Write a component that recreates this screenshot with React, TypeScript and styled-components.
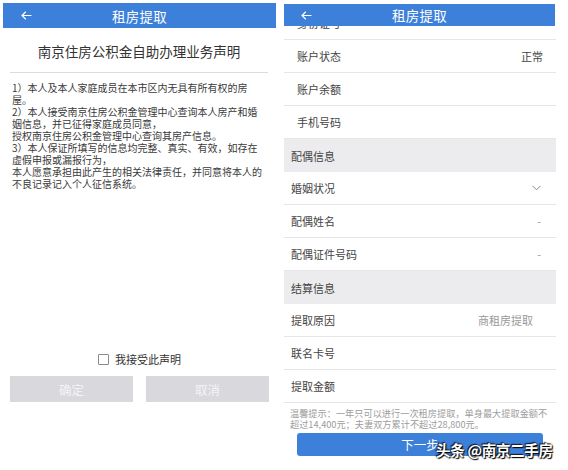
import React from 'react'
import styled, { createGlobalStyle } from 'styled-components'

const GlobalStyle = createGlobalStyle`
    html, body {
        margin: 0;
        padding: 0;
        background: #fff;
    }
    body {
        font-family: "Noto Sans CJK SC", "Noto Sans", sans-serif;
        color: #333;
    }
`

const BLUE = '#3d80da'

const Page = styled.div`
    display: flex;
    width: 568px;
    height: 470px;
    overflow: hidden;
    background: #fff;
`

const Header = styled.div`
    display: grid;
    grid-template-columns: 40px 1fr 40px;
    align-items: center;
    background: ${BLUE};
    color: #fff;
    height: ${p => p.$height}px;
`

const Back = styled.div`
    display: flex;
    align-items: center;
    padding-left: ${p => p.$offset}px;
`

const HeaderTitle = styled.div`
    text-align: center;
    font-size: 13.5px;
    letter-spacing: 0.3px;
`

// left screen
const LeftPanel = styled.div`
    box-sizing: border-box;
    width: 273px;
    height: 470px;
    margin-left: 3px;
    padding: 3px 0 68px;
    display: flex;
    flex-direction: column;
    background: #fff;
`

const DocTitle = styled.div`
    height: 42px;
    margin: 0 8px 0 7px;
    display: flex;
    align-items: center;
    justify-content: center;
    padding-top: 2px;
    font-size: 13.5px;
    color: #333;
    border-bottom: 1px solid #dcdcdc;
`

const DocBody = styled.div`
    flex: 1;
    padding: 9px 0 0 9px;
    font-size: 10px;
    line-height: 12px;
    color: #3a3a3a;
`

const DocLine = styled.div`
    white-space: nowrap;
`

const AgreeRow = styled.label`
    display: flex;
    align-items: center;
    justify-content: center;
    gap: 6px;
    font-size: 11px;
    color: #333;
    height: 12px;
`

const CheckBox = styled.span`
    box-sizing: border-box;
    width: 11px;
    height: 11px;
    border: 1px solid #8a8a8a;
    border-radius: 1px;
    background: #fff;
`

const ButtonRow = styled.div`
    display: grid;
    grid-template-columns: 1fr 1fr;
    gap: 13px;
    padding: 0 7px;
    margin-top: 11px;
`

const GreyButton = styled.div`
    height: 26px;
    display: flex;
    align-items: center;
    justify-content: center;
    background: #d9d8dc;
    color: #f4f4f6;
    font-size: 12.5px;
`

// right screen
const RightPanel = styled.div`
    position: relative;
    box-sizing: border-box;
    width: 272px;
    height: 470px;
    margin-left: 8px;
    padding-top: 7px;
    overflow: hidden;
    background: #fff;
`

const Overlay = styled.div`
    position: absolute;
    top: 4px;
    left: 0;
    right: 1px;
    z-index: 2;
`

const Row = styled.div`
    box-sizing: border-box;
    height: 33px;
    display: flex;
    align-items: center;
    justify-content: space-between;
    padding: 0 ${p => p.$right}px 0 ${p => p.$indent}px;
    font-size: 11px;
    color: #444;
    border-bottom: 1px solid #e6e6e8;
`

const Section = styled.div`
    box-sizing: border-box;
    height: 33px;
    display: flex;
    align-items: center;
    padding-left: 7px;
    background: #ececee;
    font-size: 11px;
    color: #444;
`

const Value = styled.span`
    color: ${p => p.$muted ? '#999' : '#444'};
`

const Hint = styled.div`
    margin-top: 5px;
    padding: 0 0 0 6px;
    font-size: 9.2px;
    line-height: 11px;
    color: #9c9c9c;
    white-space: nowrap;
`

const NextButton = styled.div`
    height: 23px;
    margin: 3px 13px 0;
    border-radius: 3px;
    background: ${BLUE};
    color: #fff;
    font-size: 12.5px;
    display: flex;
    align-items: center;
    justify-content: center;
`

const Watermark = styled.div`
    position: absolute;
    left: 152px;
    top: 439px;
    z-index: 3;
    font-size: 14.5px;
    font-weight: 700;
    color: #fff;
    white-space: nowrap;
    letter-spacing: -0.3px;
    text-shadow: 0 0 2px #000, 1px 1px 1px #000, -1px -1px 1px #222;
`

const Arrow = () => (
    <svg width="11" height="9" viewBox="0 0 11 9" fill="none" stroke="#fff" strokeWidth="1.2">
        <path d="M10.5 4.5H1M4.8 0.8L1 4.5l3.8 3.7" />
    </svg>
)

const Chevron = () => (
    <svg width="9" height="6" viewBox="0 0 9 6" fill="none" stroke="#888" strokeWidth="1">
        <path d="M0.5 0.8L4.5 4.8l4-4" />
    </svg>
)

const docLines = [
    '1）本人及本人家庭成员在本市区内无具有所有权的房',
    '屋。',
    '2）本人接受南京住房公积金管理中心查询本人房产和婚',
    '姻信息，并已征得家庭成员同意，',
    '授权南京住房公积金管理中心查询其房产信息。',
    '3）本人保证所填写的信息均完整、真实、有效，如存在',
    '虚假申报或漏报行为，',
    '本人愿意承担由此产生的相关法律责任，并同意将本人的',
    '不良记录记入个人征信系统。',
]

const LeftScreen = () => (
    <LeftPanel>
        <Header $height={25}>
            <Back $offset={18}><Arrow /></Back>
            <HeaderTitle>租房提取</HeaderTitle>
            <span />
        </Header>
        <DocTitle>南京住房公积金自助办理业务声明</DocTitle>
        <DocBody>
            {docLines.map((line, i) => <DocLine key={i}>{line}</DocLine>)}
        </DocBody>
        <AgreeRow>
            <CheckBox />
            我接受此声明
        </AgreeRow>
        <ButtonRow>
            <GreyButton>确定</GreyButton>
            <GreyButton>取消</GreyButton>
        </ButtonRow>
    </LeftPanel>
)

const RightScreen = () => (
    <RightPanel>
        <Overlay>
            <Header $height={22}>
                <Back $offset={17}><Arrow /></Back>
                <HeaderTitle>租房提取</HeaderTitle>
                <span />
            </Header>
        </Overlay>
        <Row $indent={13} $right={13}><span>身份证号</span></Row>
        <Row $indent={13} $right={13}><span>账户状态</span><Value>正常</Value></Row>
        <Row $indent={13} $right={13}><span>账户余额</span></Row>
        <Row $indent={13} $right={13}><span>手机号码</span></Row>
        <Section>配偶信息</Section>
        <Row $indent={7} $right={15}><span>婚姻状况</span><Chevron /></Row>
        <Row $indent={7} $right={15}><span>配偶姓名</span><Value $muted>-</Value></Row>
        <Row $indent={7} $right={15}><span>配偶证件号码</span><Value $muted>-</Value></Row>
        <Section>结算信息</Section>
        <Row $indent={7} $right={23}><span>提取原因</span><Value $muted>商租房提取</Value></Row>
        <Row $indent={7} $right={23}><span>联名卡号</span></Row>
        <Row $indent={7} $right={23}><span>提取金额</span></Row>
        <Hint>
            <div>温馨提示：一年只可以进行一次租房提取，单身最大提取金额不</div>
            <div>超过14,400元；夫妻双方累计不超过28,800元。</div>
        </Hint>
        <NextButton>下一步</NextButton>
        <Watermark>头条 @南京二手房</Watermark>
    </RightPanel>
)

export default function App() {
    return (
        <>
            <GlobalStyle />
            <Page>
                <LeftScreen />
                <RightScreen />
            </Page>
        </>
    )
}
